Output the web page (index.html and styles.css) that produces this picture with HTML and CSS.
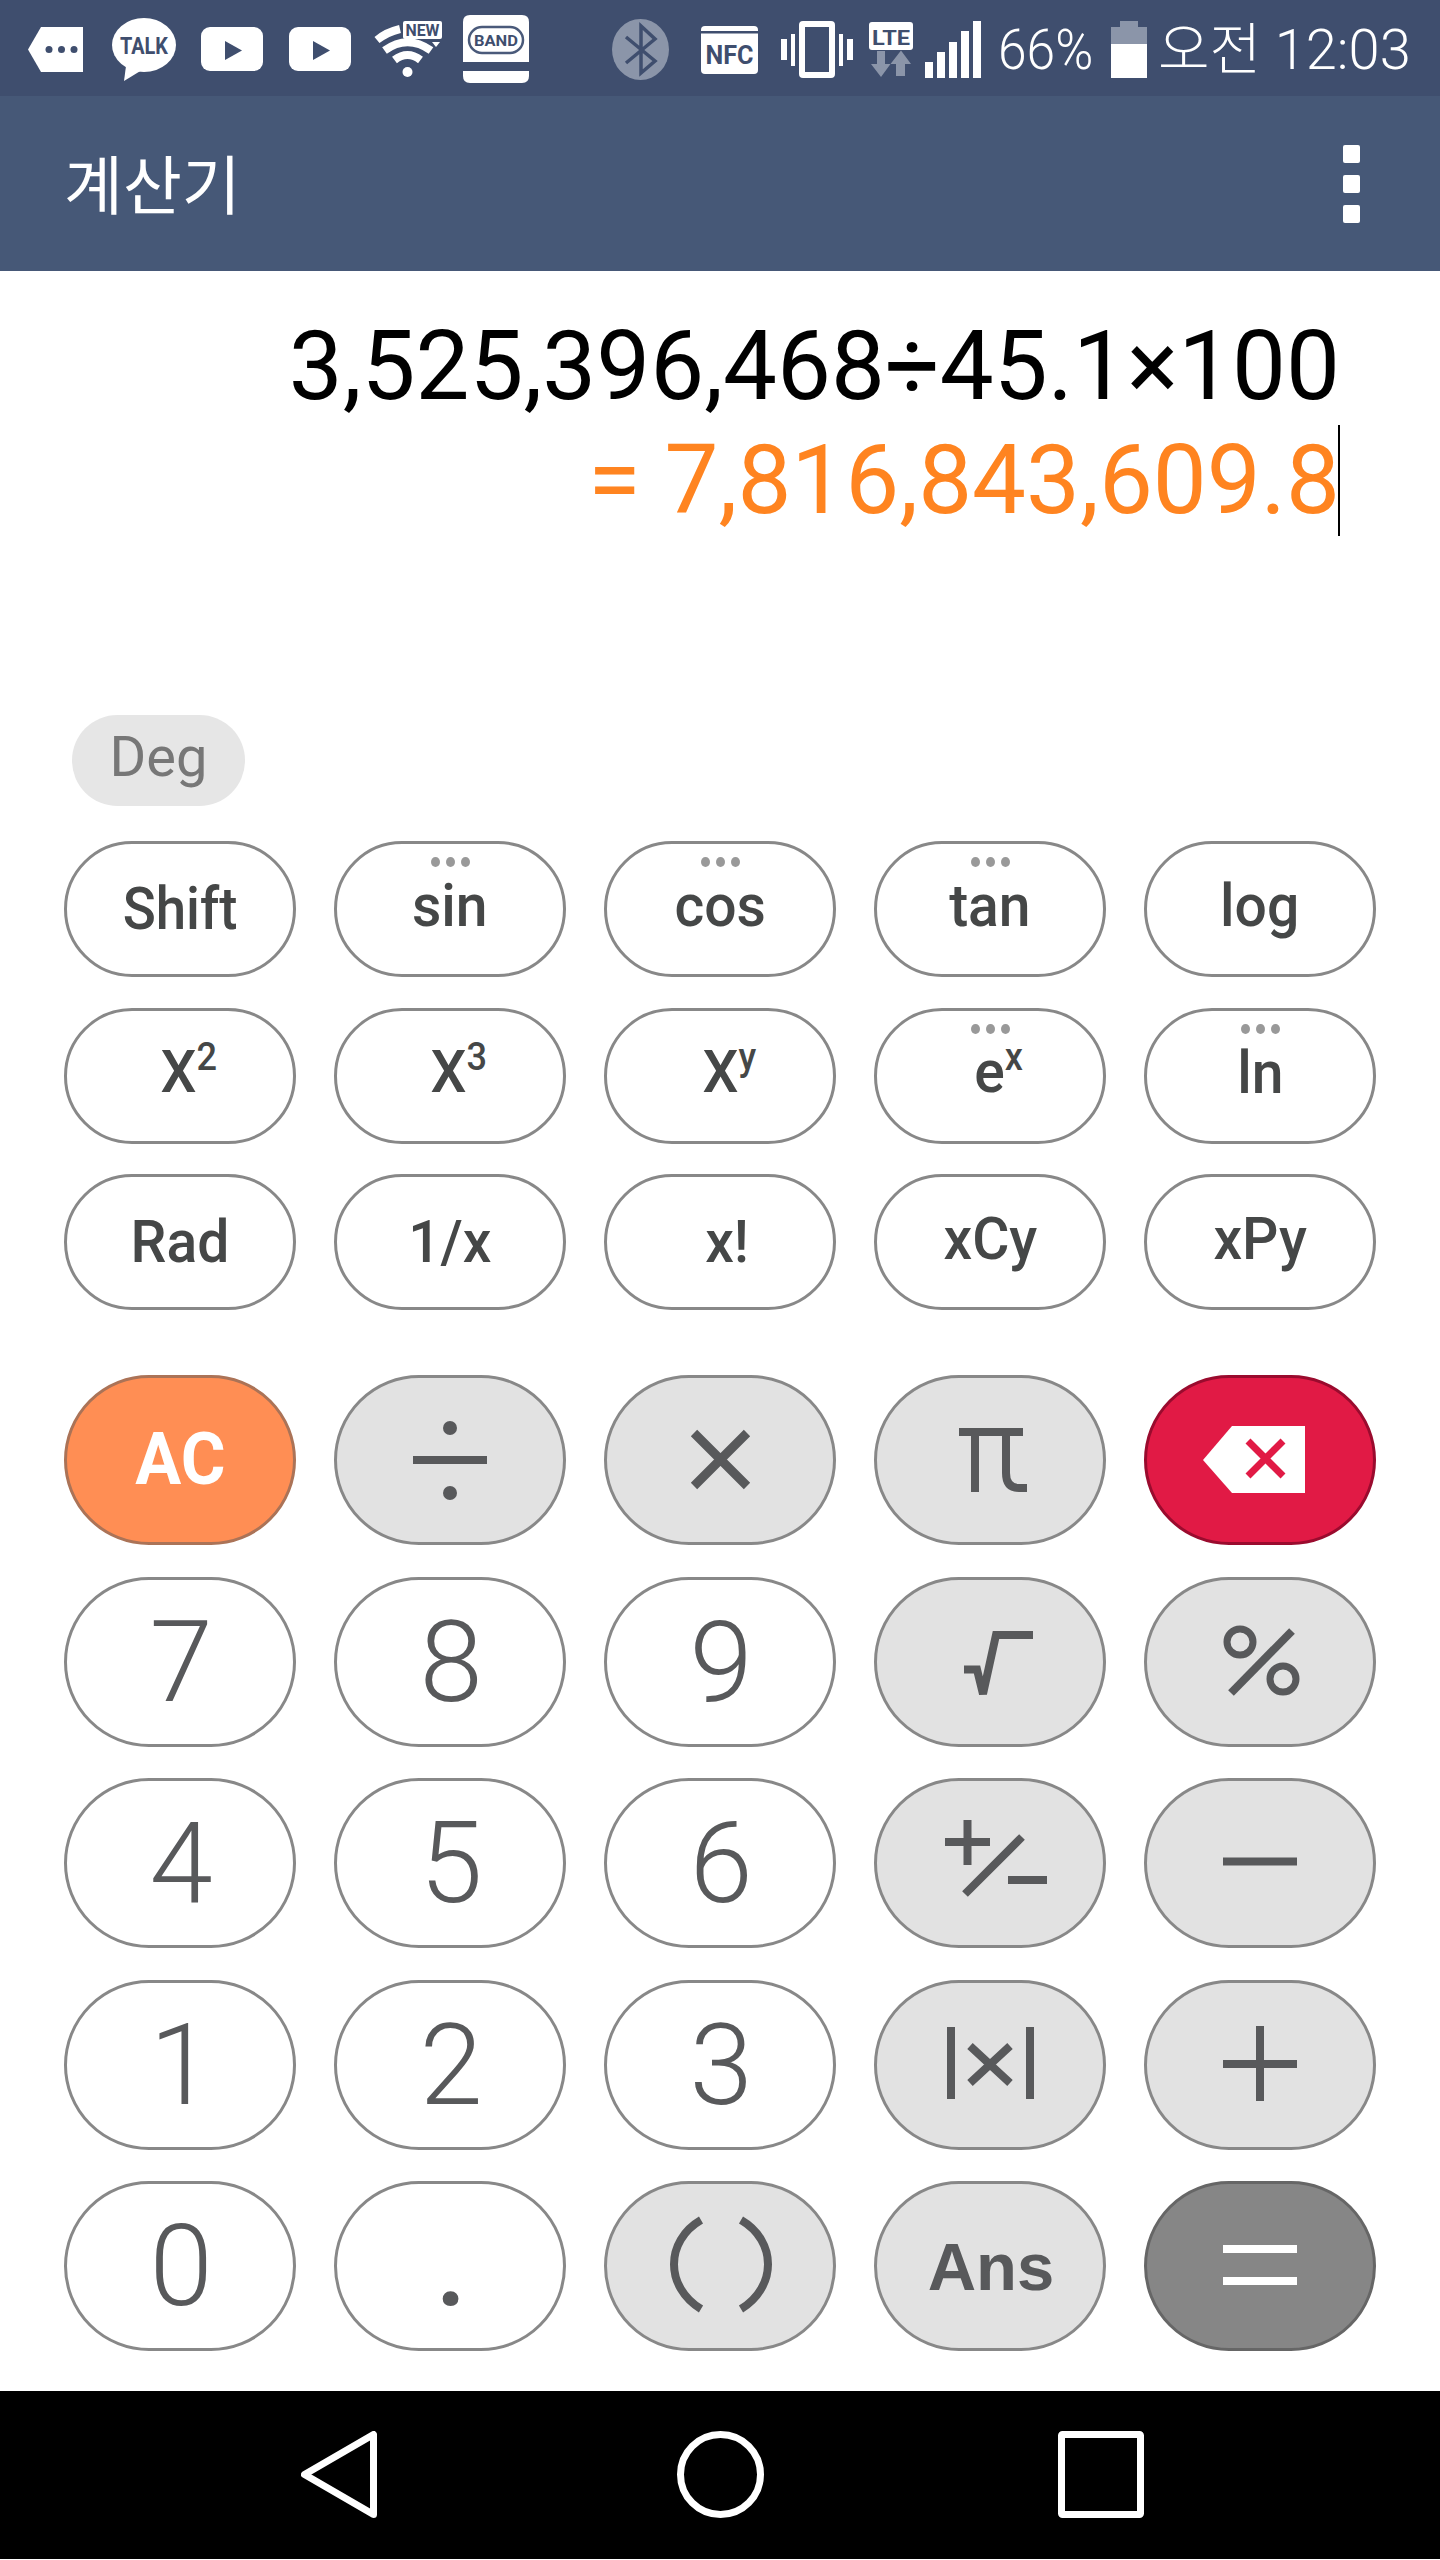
FILE: index.html
```html
<!DOCTYPE html>
<html lang="ko">
<head>
<meta charset="utf-8">
<title>계산기</title>
<link rel="stylesheet" href="styles.css">
</head>
<body>
<div class="app">
  <header class="status">
    <svg class="ic ic-msg" viewBox="0 0 55 45"><polygon class="w" points="0,22.5 13,0 55,0 55,45 13,45"/><circle class="d" cx="21" cy="22.5" r="3.5"/><circle class="d" cx="33.5" cy="22.5" r="3.5"/><circle class="d" cx="46" cy="22.5" r="3.5"/></svg>
    <svg class="ic ic-talk" viewBox="0 0 64 63"><ellipse class="w" cx="32" cy="27" rx="32" ry="27"/><polygon class="w" points="14,48 12,63 30,52"/><text class="svgt" x="32" y="36" font-size="23" text-anchor="middle" textLength="48" lengthAdjust="spacingAndGlyphs">TALK</text></svg>
    <svg class="ic ic-yt" viewBox="0 0 62 44"><rect class="w" width="62" height="44" rx="9"/><polygon class="d" points="24,14 41,23.5 24,33"/></svg>
    <svg class="ic ic-yt ic-yt2" viewBox="0 0 62 44"><rect class="w" width="62" height="44" rx="9"/><polygon class="d" points="24,14 41,23.5 24,33"/></svg>
    <svg class="ic ic-wifi" viewBox="0 0 68 56"><circle class="w" cx="33.5" cy="51" r="5"/><path class="ws" d="M20.5 39Q33.5 29 46.5 39M10.5 29.500Q33.500 13 57 29.500M3 19Q13 11 26 8"/><rect class="w" x="29" width="39" height="18" rx="2"/><text class="svgt" x="48.500" y="15" font-size="16" text-anchor="middle" textLength="34" lengthAdjust="spacingAndGlyphs">NEW</text><polygon class="w" points="58,21 66,21 62,26"/></svg>
    <svg class="ic ic-band" viewBox="0 0 66 68"><path class="w" d="M0 7Q0 0 7 0H59Q66 0 66 7V47H0ZM0 56H66V61Q66 68 59 68H7Q0 68 0 61Z"/><rect class="ol" x="6" y="12" width="54" height="26" rx="13"/><text class="svgt" x="33" y="31" font-size="15" text-anchor="middle" textLength="44" lengthAdjust="spacingAndGlyphs">BAND</text></svg>
    <svg class="ic ic-bt" viewBox="0 0 57 61"><ellipse class="g" cx="28.500" cy="30.500" rx="28.500" ry="30.500"/><path class="bt" d="M14 18L43 42L29 54V7L43 20L14 44"/></svg>
    <svg class="ic ic-nfc" viewBox="0 0 57 48"><rect class="w" width="57" height="48" rx="4"/><rect class="d" y="5" width="57" height="2.500"/><text class="svgt" x="28.500" y="38" font-size="25" text-anchor="middle" textLength="48" lengthAdjust="spacingAndGlyphs">NFC</text></svg>
    <svg class="ic ic-vib" viewBox="0 0 72 57"><rect class="ph" x="21" y="3" width="30" height="51" rx="1"/><rect class="w" y="18" width="6" height="21"/><rect class="w" x="10" y="13" width="4" height="32"/><rect class="w" x="58" y="13" width="4" height="32"/><rect class="w" x="66" y="18" width="6" height="21"/></svg>
    <svg class="ic ic-lte" viewBox="0 0 44 55"><rect class="w" width="44" height="28" rx="3"/><text class="svgt" x="22" y="23" font-size="21" text-anchor="middle" textLength="38" lengthAdjust="spacingAndGlyphs">LTE</text><polygon class="g" points="8,29 16,29 16,42 21.500,42 12,55 2,42 8,42"/><polygon class="g" points="32,28.500 42,42 36,42 36,54 27,54 27,42 21.500,42"/></svg>
    <svg class="ic ic-sig" viewBox="0 0 56 57"><rect class="w" y="41" width="8" height="16"/><rect class="w" x="12" y="31" width="8" height="26"/><rect class="w" x="24" y="21" width="8" height="36"/><rect class="w" x="36" y="10" width="8" height="47"/><rect class="w" x="48" width="8" height="57"/></svg>
    <span class="stxt batt">66%</span>
    <svg class="ic ic-bat" viewBox="0 0 36 57"><path class="g" d="M9 0H27V6H36V23H0V6H9Z"/><rect class="w" y="23" width="36" height="34"/></svg>
    <span class="stxt clock">오전 12:03</span>
  </header>

  <div class="appbar">
    <h1 class="title">계산기</h1>
    <div class="kebab"><i></i><i></i><i></i></div>
  </div>

  <section class="display">
    <div class="expr">3,525,396,468÷45.1×100</div>
    <div class="result"><span>= 7,816,843,609.8</span><i class="caret"></i></div>
  </section>

  <div class="deg">Deg</div>

  <div class="grid sci">
    <div class="key low"><span class="lbl narrow">Shift</span></div>
    <div class="key more"><span class="lbl">sin</span></div>
    <div class="key more"><span class="lbl">cos</span></div>
    <div class="key more"><span class="lbl">tan</span></div>
    <div class="key"><span class="lbl">log</span></div>

    <div class="key pow"><span class="lbl">X<sup>2</sup></span></div>
    <div class="key pow"><span class="lbl">X<sup>3</sup></span></div>
    <div class="key pow"><span class="lbl">X<sup>y</sup></span></div>
    <div class="key more pow"><span class="lbl">e<sup>x</sup></span></div>
    <div class="key more"><span class="lbl">ln</span></div>

    <div class="key low"><span class="lbl">Rad</span></div>
    <div class="key low"><span class="lbl">1/x</span></div>
    <div class="key low"><span class="lbl bang">x!</span></div>
    <div class="key"><span class="lbl">xCy</span></div>
    <div class="key"><span class="lbl">xPy</span></div>
  </div>

  <div class="grid pad">
    <div class="key ac"><span class="lbl">AC</span></div>
    <div class="key op" aria-label="÷"><svg class="ico" viewBox="0 0 231 170"><rect class="f" x="78" y="81" width="74" height="8"/><circle class="f" cx="115" cy="53" r="7"/><circle class="f" cx="115" cy="118" r="7"/></svg></div>
    <div class="key op" aria-label="×"><svg class="ico" viewBox="0 0 231 170"><path class="s s9" d="M89 58L142 111M142 58L89 111"/></svg></div>
    <div class="key op" aria-label="π"><svg class="ico" viewBox="0 0 231 170"><path class="s" d="M84 57H148M100 57V117M131 57V98Q131 113 144 113H152"/></svg></div>
    <div class="key del" aria-label="지우기"><svg class="ico" viewBox="0 0 231 170"><polygon class="wf" points="58,85 87,51 160,51 160,118 87,118"/><path class="rs" d="M103 66L138 101M138 66L103 101"/></svg></div>

    <div class="key dig">7</div>
    <div class="key dig">8</div>
    <div class="key dig">9</div>
    <div class="key op" aria-label="√"><svg class="ico" viewBox="0 0 231 170"><path class="s" d="M89 92.500H102L108 117L121 58H158"/></svg></div>
    <div class="key op" aria-label="%"><svg class="ico" viewBox="0 0 231 170"><circle class="s s7" cx="95" cy="65" r="13"/><circle class="s s7" cx="138" cy="102" r="13"/><path class="s" d="M147 54L86 116"/></svg></div>

    <div class="key dig">4</div>
    <div class="key dig">5</div>
    <div class="key dig">6</div>
    <div class="key op" aria-label="±"><svg class="ico" viewBox="0 0 231 170"><path class="s" d="M70 64H115M92.500 42V87M147 59L90 116M133 102H172"/></svg></div>
    <div class="key op" aria-label="−"><svg class="ico" viewBox="0 0 231 170"><path class="s" d="M78 83.500H152"/></svg></div>

    <div class="key dig">1</div>
    <div class="key dig">2</div>
    <div class="key dig">3</div>
    <div class="key op" aria-label="|x|"><svg class="ico" viewBox="0 0 231 170"><path class="s" d="M76 47V119M155 47V119M95 66L135 103M135 66L95 103"/></svg></div>
    <div class="key op" aria-label="+"><svg class="ico" viewBox="0 0 231 170"><path class="s" d="M78 84H152M115 46V121"/></svg></div>

    <div class="key dig">0</div>
    <div class="key dig dot">.</div>
    <div class="key op" aria-label="( )"><svg class="ico" viewBox="0 0 231 170"><path class="s" d="M96 39C60 60 60 106 96 128M136 39C172 60 172 106 136 128"/></svg></div>
    <div class="key op ans">Ans</div>
    <div class="key eq" aria-label="="><svg class="ico" viewBox="0 0 231 170"><path class="es" d="M78 68H152M78 100H152"/></svg></div>
  </div>

  <nav class="nav">
    <svg class="nv nv-back" viewBox="0 0 76 87"><path d="M72.500 3.500V83.500L3.500 43.500Z"/></svg>
    <svg class="nv nv-home" viewBox="0 0 87 87"><circle cx="43.500" cy="43.500" r="40"/></svg>
    <svg class="nv nv-sq" viewBox="0 0 86 87"><rect x="3.500" y="3.500" width="79" height="80" rx="1"/></svg>
  </nav>
</div>
</body>
</html>
```
FILE: styles.css
```css
* { box-sizing: border-box; }
html, body { margin: 0; padding: 0; background: #fff; }
body { font-family: Roboto, "Noto Sans CJK KR", sans-serif; }
.app { width: 1440px; height: 2560px; display: flex; flex-direction: column; overflow: hidden; }

/* status bar */
.status { height: 96px; flex: none; background: #3f4e6e; display: flex; align-items: flex-start; padding-left: 28px; color: #fff; }
.ic { display: block; flex: none; }
.w { fill: #fff; }
.d { fill: #3f4e6e; }
.g { fill: #8b95a9; }
.ws { fill: none; stroke: #fff; stroke-width: 8; }
.ol { fill: none; stroke: #4a5a7a; stroke-width: 2.5; }
.bt { fill: none; stroke: #3f4e6e; stroke-width: 3.5; }
.ph { fill: none; stroke: #fff; stroke-width: 6; }
.svgt { font-family: Roboto, sans-serif; font-weight: 700; fill: #3f4e6e; }
.ic-msg { width: 55px; height: 45px; margin-top: 27px; }
.ic-talk { width: 64px; height: 63px; margin: 18px 0 0 29px; }
.ic-yt { width: 62px; height: 44px; margin: 27px 0 0 25px; }
.ic-yt2 { margin-left: 26px; }
.ic-wifi { width: 68px; height: 56px; margin: 21px 0 0 23px; }
.ic-band { width: 66px; height: 68px; margin: 15px 0 0 21px; }
.ic-bt { width: 57px; height: 61px; margin: 19px 0 0 83px; }
.ic-nfc { width: 57px; height: 48px; margin: 26px 0 0 32px; }
.ic-vib { width: 72px; height: 57px; margin: 21px 0 0 23px; }
.ic-lte { width: 44px; height: 55px; margin: 22px 0 0 16px; }
.ic-sig { width: 56px; height: 57px; margin: 21px 0 0 12px; }
.ic-bat { width: 36px; height: 57px; margin: 21px 0 0 20px; }
.stxt { display: block; flex: none; white-space: nowrap; font-weight: 300; font-size: 56px; line-height: 66px; margin-top: 17px; transform-origin: left center; }
.batt { width: 93px; margin-left: 17px; transform: scaleX(.92); }
.clock { width: 253px; margin-left: 11px; }

/* app bar */
.appbar { height: 175px; flex: none; background: #465877; display: flex; align-items: center; justify-content: space-between; padding: 0 80px 0 64px; }
.title { margin: 0 0 6px; font-family: "Noto Sans CJK KR", sans-serif; font-weight: 400; font-size: 64px; line-height: 70px; color: #fff; }
.kebab { display: flex; flex-direction: column; gap: 12px; }
.kebab i { display: block; width: 17px; height: 18px; border-radius: 2px; background: #fff; }

/* display */
.display { height: 444px; flex: none; padding: 38px 100px 0 0; text-align: right; font-size: 96px; line-height: 114px; }
.expr { color: #000; white-space: nowrap; }
.result { color: #ff8420; white-space: nowrap; display: flex; justify-content: flex-end; align-items: center; }
.caret { display: block; width: 2px; height: 111px; background: #000; margin-left: -2px; }

.deg { width: 173px; height: 91px; margin-left: 72px; flex: none; border-radius: 46px; background: #e6e6e6; color: #777; font-size: 56px; line-height: 84px; text-align: center; }

/* keys */
.grid { display: grid; grid-template-columns: repeat(5, 232px); column-gap: 38px; padding-left: 64px; flex: none; }
.sci { margin-top: 35px; grid-auto-rows: 136px; row-gap: 30.5px; }
.pad { margin-top: 65px; grid-auto-rows: 170px; row-gap: 31.5px; }
.key { position: relative; display: flex; align-items: center; justify-content: center; border: 3px solid #888; border-radius: 999px; background: #fff; color: #454747; overflow: visible; }
.lbl { display: inline-block; font-weight: 500; font-size: 60px; line-height: 1; white-space: nowrap; transform: scaleX(.95); padding-bottom: 6px; }
.narrow { transform: scaleX(.91); }
.bang { margin-left: 14px; }
.low .lbl { padding-bottom: 0; }
.pow .lbl { margin-left: 18px; padding-bottom: 8px; }
.lbl sup { font-size: 38px; line-height: 0; vertical-align: 22px; font-weight: 500; }
.more::before { content: ""; position: absolute; top: 13px; left: 50%; width: 9px; height: 10px; margin-left: -4.5px; border-radius: 50%; background: #999; box-shadow: -15px 0 #999, 15px 0 #999; }

.op { background: #e2e2e2; color: #58595b; }
.ac { background: #ff8e54; border-color: #ab7357; }
.ac .lbl { color: #fff; font-weight: 700; font-size: 72px; transform: scaleX(.95); padding: 0; }
.del { background: #e11a45; border-color: #9a0b2e; }
.eq { background: #868686; border-color: #666; }
.ico { display: block; flex: none; width: 231px; height: 170px; }
.f { fill: #58595b; }
.s { fill: none; stroke: #58595b; stroke-width: 8; }
.s7 { stroke-width: 7; }
.s9 { stroke-width: 9; }
.wf { fill: #fff; }
.rs { fill: none; stroke: #e11a45; stroke-width: 7; }
.es { fill: none; stroke: #fff; stroke-width: 8; }
.dig { font-weight: 300; font-size: 114px; line-height: 1; color: #58595b; padding-left: 2px; }
.dot { font-weight: 500; }
.ans { font-family: "Liberation Sans", Arial, sans-serif; font-weight: 700; font-size: 67px; padding-left: 2px; }

/* nav */
.nav { height: 168px; margin-top: 40px; flex: none; background: #000; display: flex; align-items: flex-start; padding: 40px 0 0 301px; }
.nv { display: block; flex: none; height: 87px; fill: none; stroke: #fff; stroke-width: 7; stroke-linejoin: round; }
.nv-back { width: 76px; }
.nv-home { width: 87px; margin-left: 300px; }
.nv-sq { width: 86px; margin-left: 294px; }
```
